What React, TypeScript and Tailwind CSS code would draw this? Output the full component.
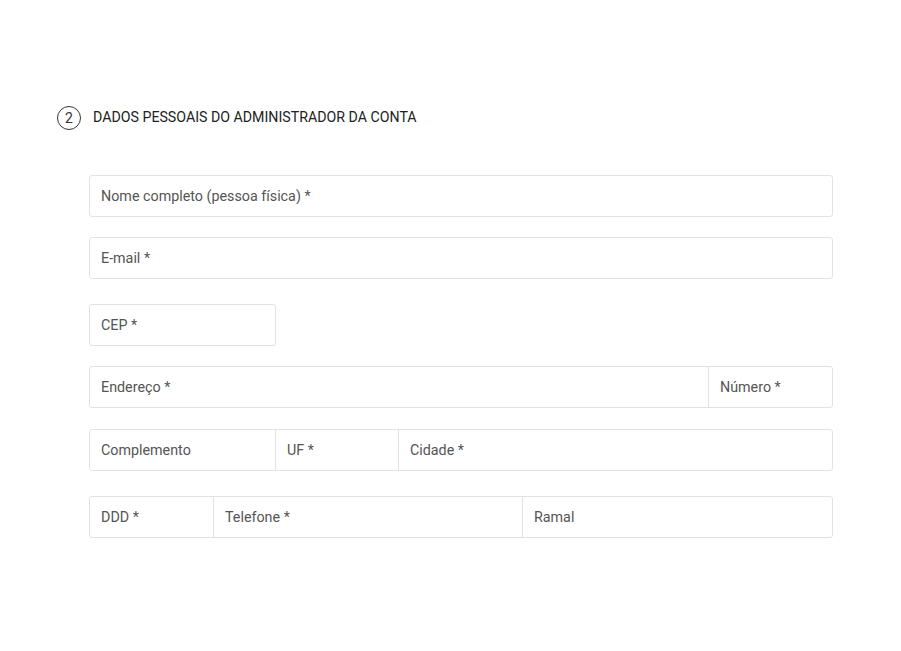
import React from "react";

const cell = "h-full w-full bg-transparent px-[11px] text-[14.3px] text-[#555] placeholder:text-[#555] outline-none";

function Field({ label, className = "" }: { label: string; className?: string }) {
  return (
    <div className={`h-[42px] rounded-[3px] border border-[#e2e2e2] ${className}`}>
      <input className={cell} placeholder={label} />
    </div>
  );
}

function Group({ cells }: { cells: { label: string; w?: string }[] }) {
  return (
    <div className="flex h-[42px] rounded-[3px] border border-[#e2e2e2]">
      {cells.map((c, i) => (
        <div key={c.label} className={`${c.w ?? "flex-1"} ${i > 0 ? "border-l border-[#e2e2e2]" : ""}`}>
          <input className={cell} placeholder={c.label} />
        </div>
      ))}
    </div>
  );
}

export default function App() {
  return (
    <div className="min-h-[651px] bg-white font-['Roboto',sans-serif]">
      <div className="pt-[106px] pl-[57px]">
        <div className="flex items-center">
          <span className="flex h-[24px] w-[24px] items-center justify-center rounded-full border border-[#333] text-[14px] text-[#333]">
            2
          </span>
          <h2 className="ml-[12px] text-[14.2px] text-[#222]">DADOS PESSOAIS DO ADMINISTRADOR DA CONTA</h2>
        </div>
      </div>

      <div className="ml-[89px] mt-[45px] w-[744px]">
        <Field label="Nome completo (pessoa física) *" />
        <Field label="E-mail *" className="mt-[20px]" />
        <Field label="CEP *" className="mt-[25px] w-[187px]" />
        <div className="mt-[20px] w-[744px]">
          <Group cells={[{ label: "Endereço *" }, { label: "Número *", w: "w-[124px]" }]} />
        </div>
        <div className="mt-[21px] w-[744px]">
          <Group
            cells={[
              { label: "Complemento", w: "w-[185px]" },
              { label: "UF *", w: "w-[123px]" },
              { label: "Cidade *" },
            ]}
          />
        </div>
        <div className="mt-[25px] w-[744px]">
          <Group
            cells={[
              { label: "DDD *", w: "w-[123px]" },
              { label: "Telefone *", w: "w-[309px]" },
              { label: "Ramal" },
            ]}
          />
        </div>
      </div>
    </div>
  );
}
